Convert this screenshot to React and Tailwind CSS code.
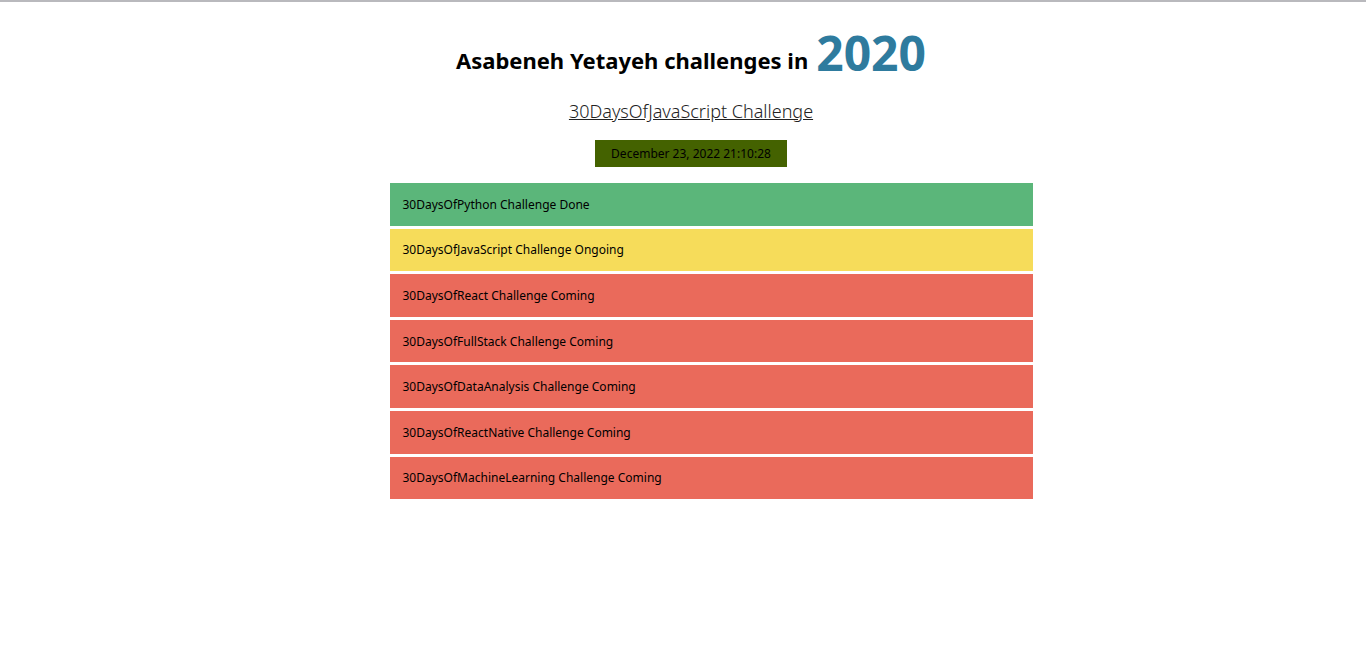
import React from "react";

const challenges = [
  { name: "30DaysOfPython", status: "Done" },
  { name: "30DaysOfJavaScript", status: "Ongoing" },
  { name: "30DaysOfReact", status: "Coming" },
  { name: "30DaysOfFullStack", status: "Coming" },
  { name: "30DaysOfDataAnalysis", status: "Coming" },
  { name: "30DaysOfReactNative", status: "Coming" },
  { name: "30DaysOfMachineLearning", status: "Coming" },
];

const statusColor = {
  Done: "bg-[#5bb67a]",
  Ongoing: "bg-[#f6dc5a]",
  Coming: "bg-[#ea6a5b]",
};

export default function App() {
  return (
    <div className="min-h-[659px] bg-white border-t-2 border-[#b9b9bd] pl-[16px] font-['Noto_Sans',sans-serif] text-black">
      <div className="flex flex-col items-center">
        <h1 className="mt-[21px] h-[54px] flex items-end text-[22px] font-bold leading-none">
          <span className="mb-[6px]">Asabeneh Yetayeh challenges in</span>
          <span className="ml-[8px] text-[48px] leading-none text-[#2e7b9e]">2020</span>
        </h1>
        <a href="#" className="mt-[21px] text-[18px] font-light underline text-[#222]">
          30DaysOfJavaScript Challenge
        </a>
        <div className="mt-[15px] w-[192px] h-[27px] flex items-center justify-center bg-[#446200] text-[12px]">
          December 23, 2022 21:10:28
        </div>
        <div className="w-[683px]">
          <ul className="mt-[16px] pl-[40px] flex flex-col gap-[3px]">
            {challenges.map((c) => (
              <li
                key={c.name}
                className={`h-[42.6px] flex items-center pl-[13px] pt-px text-[12px] ${statusColor[c.status]}`}
              >
                {c.name} Challenge {c.status}
              </li>
            ))}
          </ul>
        </div>
      </div>
    </div>
  );
}
